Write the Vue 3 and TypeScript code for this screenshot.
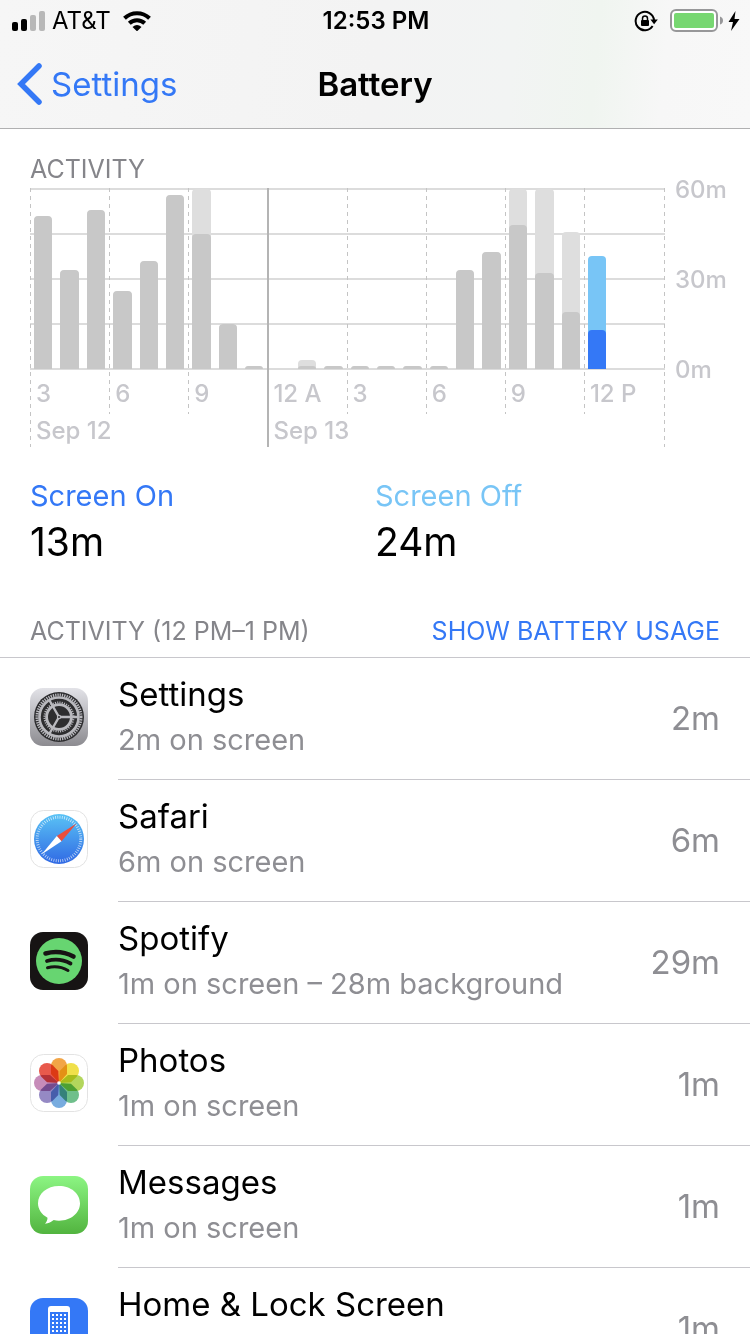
<script setup lang="ts">
interface Bar {
  on: number
  total: number
  current?: boolean
}
interface Segment {
  label: string
  bars: Bar[]
}
interface Day {
  name: string
  segments: Segment[]
}
interface AppRow {
  id: string
  name: string
  detail: string
  time: string
}

const bar = (on: number, total: number = on, current = false): Bar => ({ on, total, current })

const days: Day[] = [
  {
    name: 'Sep 12',
    segments: [
      { label: '3', bars: [bar(51), bar(33), bar(53)] },
      { label: '6', bars: [bar(26), bar(36), bar(58)] },
      { label: '9', bars: [bar(45, 60), bar(15), bar(1)] },
    ],
  },
  {
    name: 'Sep 13',
    segments: [
      { label: '12 A', bars: [bar(0), bar(1, 3), bar(1)] },
      { label: '3', bars: [bar(1), bar(1), bar(1)] },
      { label: '6', bars: [bar(1), bar(33), bar(39)] },
      { label: '9', bars: [bar(48, 60), bar(32, 60), bar(19, 45.7)] },
      { label: '12 P', bars: [bar(13, 37.7, true), bar(0), bar(0)] },
    ],
  },
]

const apps: AppRow[] = [
  { id: 'settings', name: 'Settings', detail: '2m on screen', time: '2m' },
  { id: 'safari', name: 'Safari', detail: '6m on screen', time: '6m' },
  { id: 'spotify', name: 'Spotify', detail: '1m on screen – 28m background', time: '29m' },
  { id: 'photos', name: 'Photos', detail: '1m on screen', time: '1m' },
  { id: 'messages', name: 'Messages', detail: '1m on screen', time: '1m' },
  { id: 'home', name: 'Home & Lock Screen', detail: '1m on screen', time: '1m' },
]

const petals = ['#f2a546', '#f0e04a', '#b3d65c', '#6fbf8b', '#78acdf', '#9589c4', '#c78cb9', '#e8594c']

const percent = (minutes: number, of: number) => (of ? `${(minutes / of) * 100}%` : '0%')
</script>

<template>
  <div class="screen">
    <header class="top">
      <div class="status">
        <div class="carrier">
          <svg class="signal" viewBox="0 0 34 20" aria-hidden="true">
            <rect x="0" y="11" width="6" height="9" rx="2" />
            <rect x="9" y="8" width="6" height="12" rx="2" />
            <rect x="18" y="4" width="6" height="16" rx="2" fill="#b8b8b8" />
            <rect x="27" y="0" width="6" height="20" rx="2" fill="#b8b8b8" />
          </svg>
          <span>AT&amp;T</span>
          <svg class="wifi" viewBox="0 0 28 20" aria-hidden="true">
            <g fill="none" stroke="#000" stroke-width="4">
              <path d="M1.5 7.2A18 18 0 0 1 26.500 7.200" />
              <path d="M6.300 12.300A11 11 0 0 1 21.700 12.300" />
            </g>
            <path d="M9.500 16Q14 12 18.500 16L14 20.300Z" />
          </svg>
        </div>
        <time class="clock">12:53 PM</time>
        <div class="indicators">
          <svg class="lock" viewBox="0 0 24 22" aria-hidden="true">
            <path d="M18.600 16A9.200 9.200 0 1 1 20 10" fill="none" stroke="#000" stroke-width="2" />
            <path d="M16.400 9.500H23.800L20.100 14.200Z" />
            <rect x="7" y="10" width="8" height="6" rx="1" />
            <path d="M8.500 10.500V8.500a2.500 2.500 0 0 1 5 0V10.500" fill="none" stroke="#000" stroke-width="1.500" />
          </svg>
          <svg class="cell" viewBox="0 0 54 24" aria-hidden="true">
            <rect x="1" y="1" width="46" height="21" rx="5" fill="#fff" stroke="#979799" stroke-width="2" />
            <rect x="4" y="4" width="40" height="15" rx="2" fill="#77d771" />
            <path d="M50 7.500Q53 8.500 53 11.500T50 15.500Z" fill="#979799" />
          </svg>
          <svg class="bolt" viewBox="0 0 12 20" aria-hidden="true">
            <path d="M7.500 0L0.500 11H5L3 20L11.500 8H6.500Z" />
          </svg>
        </div>
      </div>
      <nav class="nav">
        <a class="back" href="#settings">
          <svg viewBox="0 0 26 44" aria-hidden="true">
            <path d="M23 4L5 22L23 40" fill="none" stroke="currentColor" stroke-width="5.500" stroke-linecap="round" stroke-linejoin="miter" />
          </svg>
          <span>Settings</span>
        </a>
        <h1>Battery</h1>
      </nav>
    </header>

    <main class="content">
      <section class="activity">
        <h2 class="caption">ACTIVITY</h2>
        <div class="chart">
          <div class="plot">
            <div
              v-for="day in days"
              :key="day.name"
              class="day"
              :style="{ flexGrow: day.segments.length }"
            >
              <div class="segments">
                <div v-for="segment in day.segments" :key="segment.label" class="segment">
                  <div class="bars">
                    <div v-for="(b, i) in segment.bars" :key="i" class="slot">
                      <div class="bar" :class="{ current: b.current }" :style="{ height: percent(b.total, 60) }">
                        <div class="on" :style="{ height: percent(b.on, b.total) }"></div>
                      </div>
                    </div>
                  </div>
                  <span class="hour">{{ segment.label }}</span>
                </div>
              </div>
              <span class="date">{{ day.name }}</span>
            </div>
          </div>
          <div class="scale">
            <span>60m</span>
            <span>30m</span>
            <span>0m</span>
          </div>
        </div>
      </section>

      <dl class="totals">
        <div class="total on-total">
          <dt>Screen On</dt>
          <dd>13m</dd>
        </div>
        <div class="total off-total">
          <dt>Screen Off</dt>
          <dd>24m</dd>
        </div>
      </dl>

      <div class="list-head">
        <h2 class="caption">ACTIVITY (12 PM–1 PM)</h2>
        <button type="button" class="toggle">SHOW BATTERY USAGE</button>
      </div>

      <ul class="apps">
        <li v-for="app in apps" :key="app.id" class="app">
          <svg v-if="app.id === 'settings'" class="icon" viewBox="0 0 58 58" aria-hidden="true">
            <defs>
              <linearGradient id="steel" x1="0" y1="0" x2="0" y2="1">
                <stop offset="0" stop-color="#e2e2e7" />
                <stop offset="1" stop-color="#8c8b90" />
              </linearGradient>
            </defs>
            <rect width="58" height="58" rx="13" fill="url(#steel)" />
            <circle cx="29" cy="29" r="25" fill="#2d2d2f" />
            <g fill="none" stroke="#b9b9be">
              <circle cx="29" cy="29" r="22" stroke-width="3" stroke-dasharray="1.300 1.004" />
              <circle cx="29" cy="29" r="19.500" stroke-width="2.600" />
              <circle cx="29" cy="29" r="14.500" stroke-width="2" stroke-dasharray="1.100 1.178" />
              <circle cx="29" cy="29" r="12.400" stroke-width="2.800" />
              <path d="M29 29H48M29 29L19.500 12.500M29 29L19.500 45.500" stroke-width="2.400" />
            </g>
            <circle cx="29" cy="29" r="2.200" fill="#b9b9be" />
            <circle cx="29" cy="29" r="1" fill="#2d2d2f" />
          </svg>

          <svg v-else-if="app.id === 'safari'" class="icon" viewBox="0 0 58 58" aria-hidden="true">
            <defs>
              <linearGradient id="sky" x1="0" y1="0" x2="0" y2="1">
                <stop offset="0" stop-color="#5ac3f5" />
                <stop offset="1" stop-color="#3069e4" />
              </linearGradient>
            </defs>
            <rect x="0.500" y="0.500" width="57" height="57" rx="13" fill="#fff" stroke="#e3e3e3" />
            <circle cx="29" cy="29" r="25" fill="url(#sky)" />
            <circle cx="29" cy="29" r="21.800" fill="none" stroke="#fff" stroke-opacity="0.700" stroke-width="3" stroke-dasharray="0.800 1.483" />
            <path d="M46.500 13.500L26.800 26L31.500 31.200Z" fill="#ea4e3d" />
            <path d="M11.500 44.500L26.800 26L31.500 31.200Z" fill="#fff" />
          </svg>

          <svg v-else-if="app.id === 'spotify'" class="icon" viewBox="0 0 58 58" aria-hidden="true">
            <rect width="58" height="58" rx="13" fill="#171414" />
            <circle cx="29" cy="29" r="23" fill="#67d571" />
            <g fill="none" stroke="#171414" stroke-linecap="round">
              <path d="M15.500 21.500Q30 17.500 43.500 24.500" stroke-width="4.600" />
              <path d="M17 29Q29.500 25.500 40.500 31.500" stroke-width="3.800" />
              <path d="M17.500 35.700Q28.500 33 38 38.500" stroke-width="3" />
            </g>
          </svg>

          <svg v-else-if="app.id === 'photos'" class="icon" viewBox="0 0 58 58" aria-hidden="true">
            <rect x="0.500" y="0.500" width="57" height="57" rx="13" fill="#fff" stroke="#e3e3e3" />
            <g class="petals">
              <path
                v-for="(color, i) in petals"
                :key="color"
                d="M29 4A8 8 0 0 1 37 12V20L29 29L21 20V12A8 8 0 0 1 29 4Z"
                :fill="color"
                :transform="`rotate(${i * 45} 29 29)`"
              />
            </g>
            <circle cx="29" cy="29" r="1.800" fill="#fff" />
          </svg>

          <svg v-else-if="app.id === 'messages'" class="icon" viewBox="0 0 58 58" aria-hidden="true">
            <defs>
              <linearGradient id="leaf" x1="0" y1="0" x2="0" y2="1">
                <stop offset="0" stop-color="#8cf583" />
                <stop offset="1" stop-color="#52b43f" />
              </linearGradient>
            </defs>
            <rect width="58" height="58" rx="13" fill="url(#leaf)" />
            <path
              d="M29 10C17 10 8 17.500 8 27.300C8 33.300 11.500 38.500 17.500 41.700C17.500 44 16.500 46 15 47.800C18.500 47.600 21.500 46 23.700 44.100C25.400 44.500 27.200 44.700 29 44.700C41 44.700 50 37 50 27.300C50 17.500 41 10 29 10Z"
              fill="#fff"
            />
          </svg>

          <svg v-else class="icon" viewBox="0 0 58 58" aria-hidden="true">
            <defs>
              <pattern id="keys" x="22" y="16" width="4" height="4" patternUnits="userSpaceOnUse">
                <rect width="2" height="2" fill="#fff" />
              </pattern>
            </defs>
            <rect width="58" height="58" rx="13" fill="#3478f6" />
            <rect x="18" y="8" width="22" height="42" rx="3" fill="#fff" />
            <rect x="20" y="14" width="18" height="29" fill="#3478f6" />
            <rect x="22" y="16" width="14" height="26" fill="url(#keys)" />
          </svg>

          <div class="row">
            <div class="text">
              <h3>{{ app.name }}</h3>
              <p>{{ app.detail }}</p>
            </div>
            <span class="spent">{{ app.time }}</span>
          </div>
        </li>
      </ul>
    </main>
  </div>
</template>

<style>
html,
body {
  margin: 0;
  background: #fff;
}
</style>

<style scoped>
.screen {
  display: flex;
  flex-direction: column;
  height: 100vh;
  overflow: hidden;
  background: #fff;
  color: #000;
  font-family: Inter, "Liberation Sans", sans-serif;
}

h1,
h2,
h3,
p,
dl,
dd,
ul {
  margin: 0;
  padding: 0;
}

svg {
  display: block;
  flex: none;
}

.top {
  flex: none;
  border-bottom: 1px solid #b0b0b1;
  background: linear-gradient(95deg, #f6f6f6 0%, #f3f3f3 50%, #f2f4f3 68%, #f0f5f0 79%, #f7f7f7 88%, #f8f8f8 100%);
}

.status {
  display: grid;
  grid-template-columns: 1fr auto 1fr;
  align-items: center;
  height: 38px;
  padding: 2px 10px 0 12px;
  font-size: 24px;
  line-height: 30px;
}

.carrier {
  display: flex;
  align-items: center;
  gap: 6px;
}

.signal {
  width: 34px;
  height: 20px;
}

.wifi {
  width: 28px;
  height: 20px;
  margin-left: 6px;
}

.clock {
  font-weight: 600;
}

.indicators {
  display: flex;
  align-items: center;
  justify-content: flex-end;
}

.lock {
  width: 24px;
  height: 22px;
  margin-right: 12px;
}

.cell {
  width: 54px;
  height: 24px;
}

.bolt {
  width: 12px;
  height: 20px;
  margin-left: 4px;
}

.nav {
  display: grid;
  grid-template-columns: 1fr auto 1fr;
  align-items: center;
  height: 88px;
  padding: 0 16px;
}

.back {
  display: flex;
  align-items: center;
  justify-self: start;
  gap: 9px;
  color: #3478f6;
  font-size: 33px;
  line-height: 40px;
  text-decoration: none;
}

.back svg {
  width: 26px;
  height: 44px;
}

.nav h1 {
  font-size: 33px;
  font-weight: 600;
  line-height: 40px;
}

.content {
  flex: 1;
  min-height: 0;
  overflow-y: auto;
  scrollbar-width: none;
}

.caption {
  color: #85858a;
  font-size: 25px;
  font-weight: 400;
  line-height: 30px;
}

.activity {
  padding: 25px 0 0 30px;
}

.chart {
  display: flex;
  margin-top: 4px;
}

.plot {
  position: relative;
  display: flex;
  flex: 1;
  padding-right: 2px;
  background: repeating-linear-gradient(#dcdcdc 0 2px, transparent 2px 45px) top / 100% 182px no-repeat;
}

.plot::after,
.day::before,
.segment::before {
  content: "";
  position: absolute;
  top: 0;
  bottom: 0;
  left: 0;
  width: 1px;
  background: repeating-linear-gradient(#c4c4c4 0 4px, transparent 4px 8px);
}

.plot::after {
  right: 0;
  left: auto;
}

.day {
  position: relative;
  flex: 1 1 0;
}

.day + .day::before {
  width: 2px;
  background: #b4b4b4;
}

.segments {
  display: flex;
}

.segment {
  position: relative;
  flex: 1;
}

.segment:first-child::before {
  display: none;
}

.bars {
  display: flex;
  height: 180px;
  padding-top: 1px;
}

.slot {
  display: flex;
  flex: 1;
  align-items: flex-end;
  padding: 0 4px;
}

.bar {
  display: flex;
  flex: 1;
  align-items: flex-end;
  border-radius: 4px 4px 0 0;
  background: #dedede;
  overflow: hidden;
}

.on {
  flex: 1;
  border-radius: 4px 4px 0 0;
  background: #c8c8c8;
}

.bar.current {
  background: #78c5f6;
}

.bar.current .on {
  background: #3478f6;
}

.hour,
.date,
.scale {
  color: #c7c7cc;
  font-size: 24px;
  font-weight: 500;
  line-height: 30px;
}

.hour,
.date {
  display: block;
  padding-left: 6px;
  white-space: nowrap;
}

.hour {
  margin-top: 10px;
  padding-bottom: 5px;
}

.date {
  padding-top: 2px;
  padding-bottom: 1px;
}

.scale {
  display: flex;
  flex-direction: column;
  justify-content: space-between;
  width: 75px;
  height: 210px;
  margin-top: -13px;
  padding-left: 10px;
}

.totals {
  display: grid;
  grid-template-columns: 1fr 1fr;
  padding: 31px 30px 0;
}

.total dt {
  font-size: 29px;
  line-height: 36px;
}

.total dd {
  margin-top: 5px;
  font-size: 39px;
  line-height: 46px;
}

.on-total dt {
  color: #3478f6;
}

.off-total dt {
  color: #78c5f6;
}

.list-head {
  display: flex;
  justify-content: space-between;
  margin-top: 51px;
  padding: 0 30px 11px;
  border-bottom: 1px solid #c8c7cc;
}

.toggle {
  padding: 0;
  border: 0;
  background: none;
  color: #3478f6;
  font: inherit;
  font-size: 25px;
  line-height: 30px;
  cursor: pointer;
}

.apps {
  list-style: none;
}

.app {
  display: flex;
  align-items: flex-start;
  gap: 30px;
  padding-left: 30px;
}

.icon {
  width: 58px;
  height: 58px;
  margin-top: 30px;
}

.petals {
  isolation: isolate;
}

.petals path {
  mix-blend-mode: multiply;
}

.row {
  display: flex;
  flex: 1;
  align-items: center;
  justify-content: space-between;
  padding: 16px 30px 18px 0;
  border-bottom: 1px solid #c8c7cc;
}

.text {
  padding-bottom: 3px;
}

.text h3 {
  font-size: 33px;
  font-weight: 400;
  line-height: 40px;
}

.text p {
  margin-top: 8px;
  color: #8e8e93;
  font-size: 29px;
  line-height: 36px;
}

.spent {
  color: #8e8e93;
  font-size: 33px;
  line-height: 40px;
}
</style>
